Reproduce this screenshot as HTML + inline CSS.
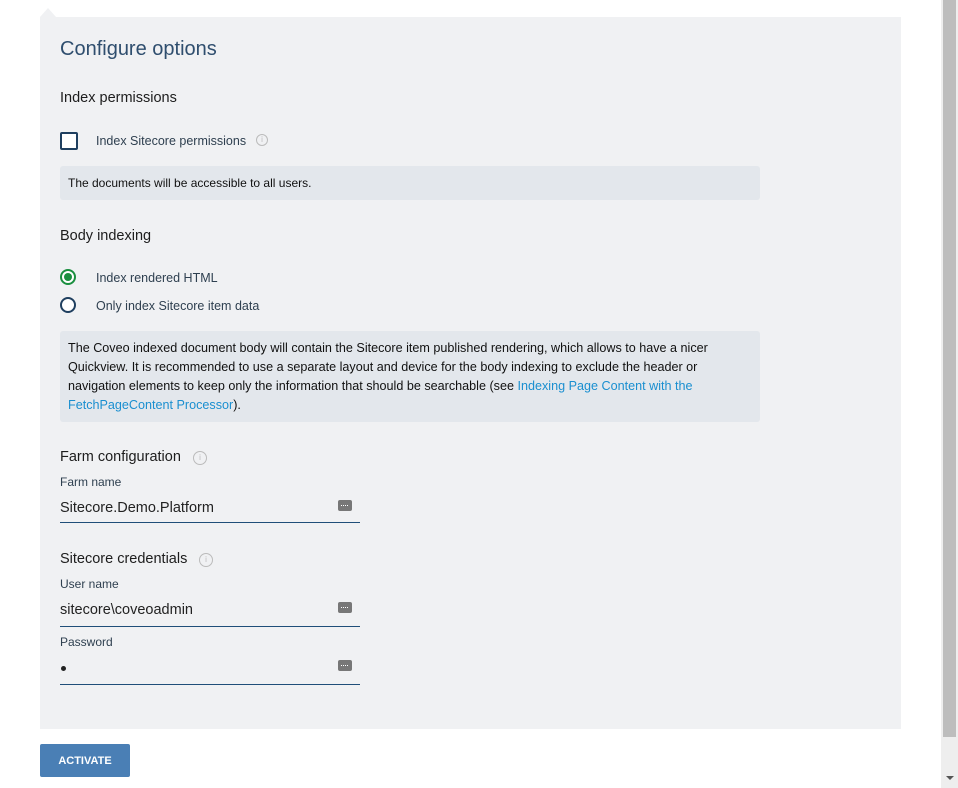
<!DOCTYPE html>
<html><head><style>
body{margin:0;width:958px;height:788px;background:#fff;font-family:"Liberation Sans",sans-serif;position:relative;overflow:hidden;color:#1d1d1d}
.a{position:absolute;white-space:nowrap}
.panel{position:absolute;left:40px;top:17px;width:861px;height:712px;background:#f0f1f3}
.notch{position:absolute;left:40px;top:8px;width:0;height:0;border-left:8px solid transparent;border-right:8px solid transparent;border-bottom:9px solid #f0f1f3}
.box{position:absolute;left:60px;width:700px;background:#e3e7ec;border-radius:3px;font-size:12px;color:#111}
.info{position:absolute;width:10px;height:10px;border:1px solid #bbb;border-radius:50%;color:#bbb;font-size:8px;line-height:10px;text-align:center}
.field{position:absolute;left:60px;width:300px;border-bottom:1px solid #1f4e79}
.kb{position:absolute;left:338px;width:14px;height:11px;background:#777;border-radius:2px}
.kb:after{content:"";position:absolute;left:3px;top:5px;width:7px;height:1px;border-top:1px dotted #fff}
</style></head><body>
<div class="notch"></div>
<div class="panel"></div>
<div class="a" style="left:60px;top:38px;font-size:20px;color:#2f4e6e">Configure options</div>
<div class="a" style="left:60px;top:90px;font-size:14.5px">Index permissions</div>
<div class="a" style="left:60px;top:132px;width:14px;height:14px;border:2px solid #1f3f5f;border-radius:2px;background:#fff"></div>
<div class="a" style="left:96px;top:134px;font-size:12.5px;color:#2f4050">Index Sitecore permissions</div>
<div class="info" style="left:256px;top:134px">i</div>
<div class="box" style="top:166px;height:34px;line-height:34px;padding-left:8px;width:692px">The documents will be accessible to all users.</div>
<div class="a" style="left:60px;top:228px;font-size:14.5px">Body indexing</div>
<div class="a" style="left:60px;top:269px;width:12px;height:12px;border:2px solid #1a8f3f;border-radius:50%;background:#fff"></div>
<div class="a" style="left:64px;top:273px;width:8px;height:8px;border-radius:50%;background:#1a8f3f"></div>
<div class="a" style="left:96px;top:271px;font-size:12.5px;color:#2f4050">Index rendered HTML</div>
<div class="a" style="left:60px;top:297px;width:12px;height:12px;border:2px solid #1f3f5f;border-radius:50%;background:#fff"></div>
<div class="a" style="left:96px;top:299px;font-size:12.5px;color:#2f4050">Only index Sitecore item data</div>
<div class="box" style="top:331px;padding:8px;width:684px;box-sizing:content-box;height:75px;line-height:19px;font-size:12.6px;white-space:nowrap">The Coveo indexed document body will contain the Sitecore item published rendering, which allows to have a nicer<br>Quickview. It is recommended to use a separate layout and device for the body indexing to exclude the header or<br>navigation elements to keep only the information that should be searchable (see <span style="color:#1a8fd0">Indexing Page Content with the</span><br><span style="color:#1a8fd0">FetchPageContent Processor</span>).</div>
<div class="a" style="left:60px;top:449px;font-size:14.5px">Farm configuration</div>
<div class="info" style="left:193px;top:451px;width:12px;height:12px;line-height:12px">i</div>
<div class="a" style="left:60px;top:475px;font-size:12px;color:#2f4050">Farm name</div>
<div class="a" style="left:60px;top:500px;font-size:14.5px;color:#222">Sitecore.Demo.Platform</div>
<div class="kb" style="top:500px"></div>
<div class="field" style="top:522px"></div>
<div class="a" style="left:60px;top:551px;font-size:14.5px">Sitecore credentials</div>
<div class="info" style="left:199px;top:553px;width:12px;height:12px;line-height:12px">i</div>
<div class="a" style="left:60px;top:577px;font-size:12px;color:#2f4050">User name</div>
<div class="a" style="left:60px;top:602px;font-size:14.5px;color:#222">sitecore\coveoadmin</div>
<div class="kb" style="top:602px"></div>
<div class="field" style="top:626px"></div>
<div class="a" style="left:60px;top:635px;font-size:12px;color:#2f4050">Password</div>
<div class="a" style="left:61px;top:666px;width:5px;height:5px;border-radius:50%;background:#222"></div>
<div class="kb" style="top:660px"></div>
<div class="field" style="top:684px"></div>
<div class="a" style="left:40px;top:744px;width:90px;height:33px;background:#4a7fb5;border-radius:2px;color:#fff;font-size:11px;font-weight:bold;line-height:35px;text-align:center">ACTIVATE</div>
<div class="a" style="left:941px;top:0;width:17px;height:788px;background:#eee"></div>
<div class="a" style="left:943px;top:0;width:13px;height:737px;background:#bdbdbd"></div>
<div class="a" style="left:946px;top:776px;width:0;height:0;border-left:4px solid transparent;border-right:4px solid transparent;border-top:4px solid #555"></div>
</body></html>
